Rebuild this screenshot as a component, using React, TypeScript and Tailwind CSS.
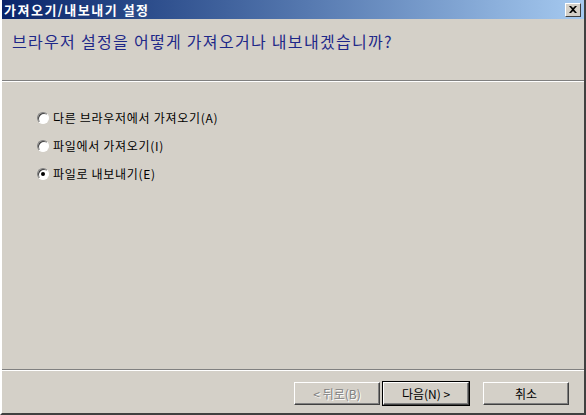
import React from 'react'

const ko = "font-['Noto_Sans_CJK_KR','Noto_Sans',sans-serif]"

function Radio({ checked }: { checked?: boolean }) {
  return (
    <span className="w-3 h-3 rounded-full bg-white border border-t-[#808080] border-l-[#808080] border-b-white border-r-white shadow-[inset_1px_1px_0_#404040] flex items-center justify-center shrink-0">
      {checked && <span className="w-1 h-1 rounded-full bg-black" />}
    </span>
  )
}

function Option({ label, checked }: { label: string; checked?: boolean }) {
  return (
    <div className="h-[28px] flex items-center gap-[4px] pl-[35px]">
      <Radio checked={checked} />
      <span className="text-[12px] text-black leading-none tracking-[0.7px]">{label}</span>
    </div>
  )
}

function Btn({ children, disabled, isDefault }: { children: React.ReactNode; disabled?: boolean; isDefault?: boolean }) {
  return (
    <div className={isDefault ? 'border border-black' : 'border border-transparent'}>
      <button
        className={`w-[86px] h-[23px] bg-[#d4d0c8] border border-t-white border-l-white border-b-[#404040] border-r-[#404040] shadow-[inset_-1px_-1px_0_#808080] text-[12px] leading-none flex items-center justify-center ${
          disabled ? 'text-[#808080] [text-shadow:1px_1px_0_#fff]' : 'text-black'
        }`}
      >
        {children}
      </button>
    </div>
  )
}

export default function App() {
  return (
    <div className={`w-[586px] h-[415px] bg-[#d4d0c8] flex flex-col border-l-2 border-l-white border-r-2 border-r-[#404040] border-b-2 border-b-[#404040] ${ko}`}>
      {/* title bar */}
      <div className="h-[19px] shrink-0 bg-gradient-to-r from-[#0a246a] to-[#a6caf0] flex items-center justify-between pl-[2px] pr-[3px]">
        <span className="text-white font-bold text-[13px] tracking-[1.5px] leading-none">가져오기/내보내기 설정</span>
        <div className="w-4 h-[14px] bg-[#d4d0c8] border border-t-white border-l-white border-b-[#404040] border-r-[#404040] flex items-center justify-center">
          <svg width="8" height="7" viewBox="0 0 8 7">
            <path d="M0 0 L2 0 L4 2 L6 0 L8 0 L5 3.5 L8 7 L6 7 L4 5 L2 7 L0 7 L3 3.5 Z" fill="#000" />
          </svg>
        </div>
      </div>

      {/* header */}
      <div className="h-[61px] shrink-0 flex items-center pl-[10px] pb-[18px]">
        <h1 className="text-[16px] text-[#1e2888] leading-none tracking-[1.3px]">브라우저 설정을 어떻게 가져오거나 내보내겠습니까?</h1>
      </div>
      <div className="h-px bg-[#808080]" />
      <div className="h-px bg-white" />

      {/* options */}
      <div className="flex-1 pt-[22px] flex flex-col">
        <Option label="다른 브라우저에서 가져오기(A)" />
        <Option label="파일에서 가져오기(I)" />
        <Option label="파일로 내보내기(E)" checked />
      </div>

      <div className="h-px bg-[#808080]" />
      <div className="h-px bg-white" />

      {/* buttons */}
      <div className="h-[42px] shrink-0 flex items-start justify-end pt-[10px] pr-[14px]">
        <Btn disabled>&lt; 뒤로(B)</Btn>
        <div className="w-[1px]" />
        <Btn isDefault>다음(N) &gt;</Btn>
        <div className="w-[12px]" />
        <Btn>취소</Btn>
      </div>
    </div>
  )
}
